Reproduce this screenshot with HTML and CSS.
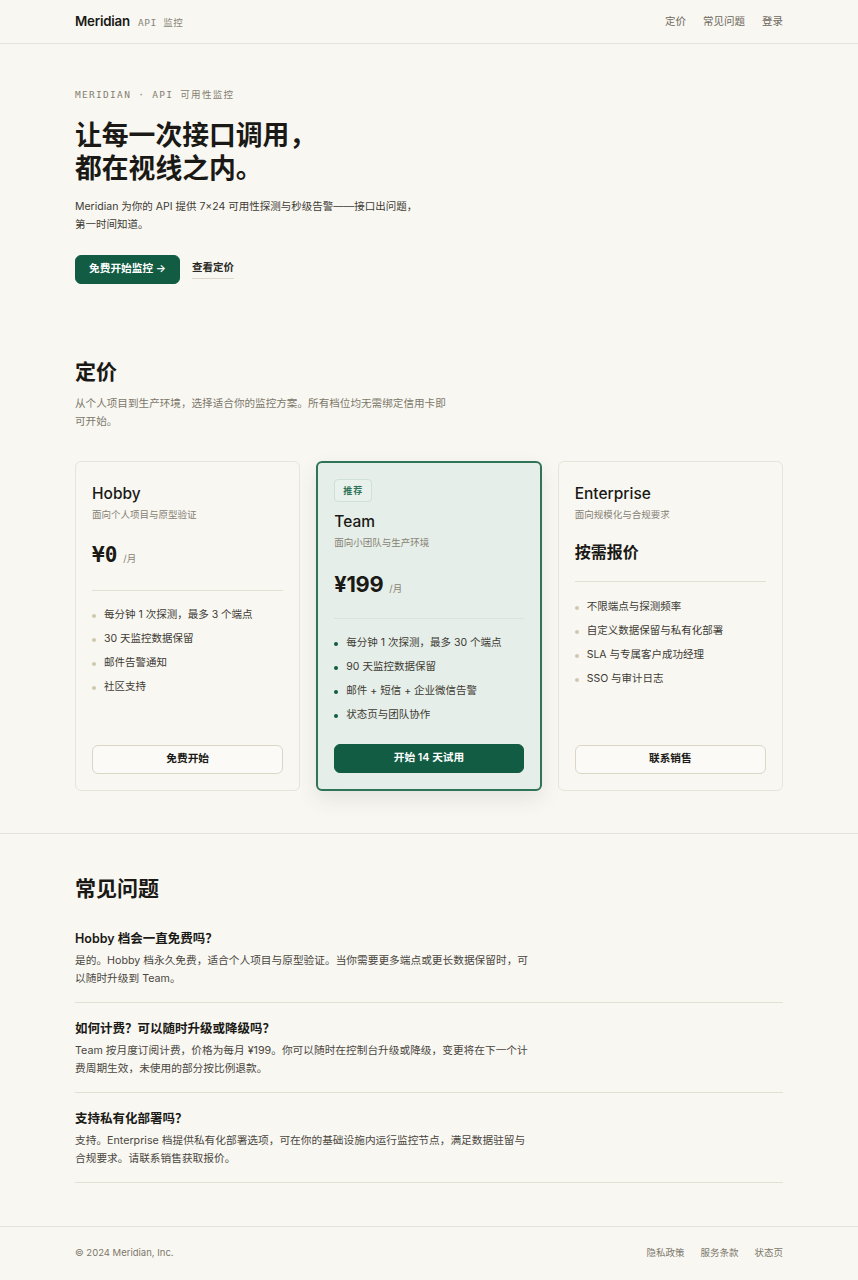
FILE: index.html
```html
<!DOCTYPE html>
<html lang="zh-CN">
<head>
<meta charset="utf-8">
<title>Meridian API 监控</title>
<link rel="stylesheet" href="styles.css">
</head>
<body>
<header class="site-header">
  <div class="container header-inner">
    <div class="brand"><span class="brand-name">Meridian</span><span class="brand-tag">API 监控</span></div>
    <nav class="nav">
      <a href="#pricing">定价</a>
      <a href="#faq">常见问题</a>
      <a href="#">登录</a>
    </nav>
  </div>
</header>

<main>
  <section class="hero container">
    <p class="eyebrow">MERIDIAN · API 可用性监控</p>
    <h1 class="hero-title">让每一次接口调用，<br>都在视线之内。</h1>
    <p class="hero-lead">Meridian 为你的 API 提供 7×24 可用性探测与秒级告警——接口出问题，<br>第一时间知道。</p>
    <div class="hero-actions">
      <a class="btn btn-primary" href="#">免费开始监控 →</a>
      <a class="link-underline" href="#pricing">查看定价</a>
    </div>
  </section>

  <section class="pricing container" id="pricing">
    <h2 class="section-title">定价</h2>
    <p class="section-sub">从个人项目到生产环境，选择适合你的监控方案。所有档位均无需绑定信用卡即可开始。</p>
    <div class="plans">
      <article class="plan">
        <h3 class="plan-name">Hobby</h3>
        <p class="plan-desc">面向个人项目与原型验证</p>
        <div class="plan-price"><span class="amount mono">¥0</span><span class="per">/月</span></div>
        <ul class="features">
          <li>每分钟 1 次探测，最多 3 个端点</li>
          <li>30 天监控数据保留</li>
          <li>邮件告警通知</li>
          <li>社区支持</li>
        </ul>
        <a class="btn btn-outline" href="#">免费开始</a>
      </article>
      <article class="plan plan-featured">
        <span class="badge">推荐</span>
        <h3 class="plan-name">Team</h3>
        <p class="plan-desc">面向小团队与生产环境</p>
        <div class="plan-price"><span class="amount">¥199</span><span class="per">/月</span></div>
        <ul class="features">
          <li>每分钟 1 次探测，最多 30 个端点</li>
          <li>90 天监控数据保留</li>
          <li>邮件 + 短信 + 企业微信告警</li>
          <li>状态页与团队协作</li>
        </ul>
        <a class="btn btn-primary btn-block" href="#">开始 14 天试用</a>
      </article>
      <article class="plan">
        <h3 class="plan-name">Enterprise</h3>
        <p class="plan-desc">面向规模化与合规要求</p>
        <div class="plan-price plan-price-quote"><span class="quote">按需报价</span></div>
        <ul class="features">
          <li>不限端点与探测频率</li>
          <li>自定义数据保留与私有化部署</li>
          <li>SLA 与专属客户成功经理</li>
          <li>SSO 与审计日志</li>
        </ul>
        <a class="btn btn-outline" href="#">联系销售</a>
      </article>
    </div>
  </section>

  <section class="faq-wrap" id="faq">
    <div class="container faq">
      <h2 class="section-title">常见问题</h2>
      <div class="faq-item">
        <h3 class="faq-q">Hobby 档会一直免费吗？</h3>
        <p class="faq-a">是的。Hobby 档永久免费，适合个人项目与原型验证。当你需要更多端点或更长数据保留时，可以随时升级到 Team。</p>
      </div>
      <div class="faq-item">
        <h3 class="faq-q">如何计费？可以随时升级或降级吗？</h3>
        <p class="faq-a">Team 按月度订阅计费，价格为每月 ¥199。你可以随时在控制台升级或降级，变更将在下一个计费周期生效，未使用的部分按比例退款。</p>
      </div>
      <div class="faq-item">
        <h3 class="faq-q">支持私有化部署吗？</h3>
        <p class="faq-a">支持。Enterprise 档提供私有化部署选项，可在你的基础设施内运行监控节点，满足数据驻留与合规要求。请联系销售获取报价。</p>
      </div>
    </div>
  </section>
</main>

<footer class="site-footer">
  <div class="container footer-inner">
    <span class="copy">© 2024 Meridian, Inc.</span>
    <nav class="footer-nav">
      <a href="#">隐私政策</a>
      <a href="#">服务条款</a>
      <a href="#">状态页</a>
    </nav>
  </div>
</footer>
</body>
</html>
```

FILE: styles.css
```css
* { box-sizing: border-box; }

html, body {
  margin: 0;
  padding: 0;
}

body {
  background: #f8f7f2;
  color: #1c1b18;
  font-family: "Inter", "Noto Sans CJK SC", sans-serif;
  font-size: 12px;
  line-height: 1.5;
}

a { color: inherit; text-decoration: none; }

h1, h2, h3, p, ul { margin: 0; padding: 0; }

.container {
  width: 708px;
  margin: 0 auto;
}

.mono {
  font-family: "DejaVu Sans Mono", "Liberation Mono", "Noto Sans CJK SC", monospace;
}

/* Header */
.site-header {
  border-bottom: 1px solid #e6e3da;
}

.header-inner {
  height: 43px;
  display: flex;
  align-items: center;
  justify-content: space-between;
}

.brand {
  display: flex;
  align-items: baseline;
  gap: 8px;
}

.brand-name {
  font-size: 13.3px;
  font-weight: 600;
  letter-spacing: -0.2px;
  color: #1a1915;
}

.brand-tag {
  font-family: "DejaVu Sans Mono", "Noto Sans CJK SC", monospace;
  font-size: 9.5px;
  color: #8a8578;
  letter-spacing: 0.6px;
}

.nav {
  display: flex;
  gap: 17px;
  font-size: 10.5px;
  color: #6e685b;
}

/* Hero */
.hero {
  padding-top: 44px;
  padding-bottom: 70px;
}

.eyebrow {
  font-family: "DejaVu Sans Mono", "Noto Sans CJK SC", monospace;
  font-size: 9.5px;
  letter-spacing: 1.3px;
  color: #857f71;
  line-height: 14px;
}

.hero-title {
  margin-top: 17px;
  font-size: 26.8px;
  line-height: 33px;
  font-weight: 700;
  letter-spacing: 0;
  color: #1a1915;
}

.hero-lead {
  margin-top: 13px;
  font-size: 10.5px;
  line-height: 18px;
  color: #3e3b34;
}

.hero-actions {
  margin-top: 21px;
  display: flex;
  align-items: center;
  gap: 12px;
}

.btn {
  display: inline-flex;
  align-items: center;
  justify-content: center;
  height: 29px;
  border-radius: 6px;
  font-size: 10.7px;
  font-weight: 600;
}

.btn-primary {
  background: #115c43;
  color: #fff;
  padding: 0 13px;
  border: 1px solid #115c43;
}

.link-underline {
  font-size: 10.5px;
  font-weight: 600;
  color: #2c2a25;
  padding-bottom: 3px;
  border-bottom: 1px solid #dcd7c9;
  line-height: 14px;
}

/* Pricing */
.pricing {
  padding-top: 3px;
  padding-bottom: 42px;
}

.section-title {
  font-size: 21px;
  font-weight: 700;
  line-height: 30px;
  color: #1a1915;
}

.section-sub {
  margin-top: 8px;
  max-width: 376px;
  font-size: 10.6px;
  line-height: 18px;
  color: #7d776a;
}

.plans {
  margin-top: 30px;
  display: grid;
  grid-template-columns: repeat(3, 1fr);
  gap: 16px;
  align-items: stretch;
}

.plan {
  display: flex;
  flex-direction: column;
  border: 1px solid #e8e4d9;
  border-radius: 6px;
  padding: 22px 16px 16px;
  background: #f8f7f2;
}

.plan-featured {
  border: 2px solid #2f7358;
  background: #e5eee8;
  padding: 16px 16px 16px;
  box-shadow: 0 8px 20px rgba(60, 55, 40, 0.10);
}

.badge {
  align-self: flex-start;
  font-size: 9px;
  font-weight: 600;
  color: #2f7358;
  background: #e9f1ec;
  border: 1px solid #cfe0d6;
  border-radius: 4px;
  padding: 4px 8px 4px;
  line-height: 13px;
  margin-bottom: 10px;
  letter-spacing: 1px;
}

.plan-name {
  font-size: 15.5px;
  font-weight: 500;
  line-height: 20px;
  color: #1a1915;
}

.plan-desc {
  margin-top: 4px;
  font-size: 9.5px;
  line-height: 14px;
  color: #878173;
}

.plan-price {
  margin-top: 18px;
  display: flex;
  align-items: baseline;
  gap: 6px;
  height: 30px;
}

.amount {
  font-size: 21px;
  font-weight: 700;
  color: #1a1915;
  letter-spacing: -0.3px;
}

.plan-featured .amount { font-size: 21.8px; }

.amount.mono { letter-spacing: 0; }

.per {
  font-size: 9.5px;
  color: #878173;
}

.plan-price-quote {
  margin-top: 18px;
  height: 22px;
}

.quote {
  font-size: 16px;
  font-weight: 700;
  color: #1a1915;
}

.plan-price + .features {
  border-top: 1px solid #e3dfd3;
  margin-top: 20px;
  padding-top: 16px;
}

.plan-price-quote + .features {
  margin-top: 19px;
  padding-top: 17px;
}

.plan-featured .plan-price + .features {
  border-top-color: #dbe3dc;
}

.features {
  list-style: none;
  display: flex;
  flex-direction: column;
  gap: 8px;
  margin-bottom: 21px;
}

.features li {
  position: relative;
  padding-left: 12px;
  font-size: 10.5px;
  line-height: 16px;
  color: #3e3b34;
}

.features li::before {
  content: "";
  position: absolute;
  left: 0;
  top: 6.5px;
  width: 4px;
  height: 4px;
  border-radius: 50%;
  background: #cfc7b1;
}

.plan-featured .features li::before {
  background: #115c43;
}

.plan .btn {
  margin-top: auto;
}

.btn-outline {
  border: 1px solid #dcd6c6;
  background: #fbfaf6;
  color: #1a1915;
}

.btn-block {
  width: 100%;
}

/* FAQ */
.faq-wrap {
  border-top: 1px solid #e6e3da;
  padding-top: 40px;
  padding-bottom: 43px;
}

.faq .section-title {
  margin-bottom: 12px;
}

.faq-item {
  border-bottom: 1px solid #e3dfd3;
  padding: 14px 0 14px;
}

.faq-item + .faq-item {
  padding-top: 17px;
}

.faq-q {
  font-size: 12.5px;
  font-weight: 600;
  line-height: 18px;
  color: #1a1915;
}

.faq-a {
  margin-top: 4px;
  max-width: 456px;
  font-size: 10.7px;
  line-height: 18px;
  color: #4a463e;
}

/* Footer */
.site-footer {
  border-top: 1px solid #e6e3da;
}

.footer-inner {
  height: 52px;
  display: flex;
  align-items: center;
  justify-content: space-between;
  font-size: 9.5px;
  color: #7d776a;
}

.footer-nav {
  display: flex;
  gap: 16px;
}
```
